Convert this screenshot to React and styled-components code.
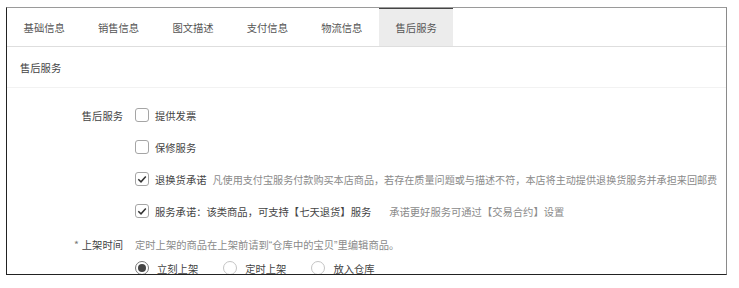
import React from 'react'
import styled, { createGlobalStyle } from 'styled-components'

const GlobalStyle = createGlobalStyle`
    body {
        margin: 0;
        background: #fff;
        font-family: "Noto Sans CJK SC", "Noto Sans", sans-serif;
    }
`

const Frame = styled.div`
    width: 721px;
    height: 268px;
    margin: 7px 0 0 6px;
    box-sizing: border-box;
    border-top: 1px solid #9a9a9a;
    border-right: 1px solid #8a8a8a;
    border-bottom: 1px solid #222;
    border-left: 1px solid #222;
    overflow: hidden;
    font-size: 10.3px;
    color: #444;
`

const TabBar = styled.div`
    display: flex;
    margin-top: -1px;
    height: 40px;
    box-sizing: border-box;
    border-bottom: 1px solid #dedede;
`

const Tab = styled.div`
    width: 74.4px;
    box-sizing: border-box;
    display: flex;
    align-items: center;
    justify-content: center;
    border-top: 2px solid ${p => (p.$active ? '#444' : 'transparent')};
    background: ${p => (p.$active ? '#ececec' : 'transparent')};
    color: #555;
    white-space: nowrap;
`

const SectionHead = styled.div`
    height: 41px;
    box-sizing: border-box;
    display: flex;
    align-items: center;
    padding-left: 13px;
    border-bottom: 1px solid #f2f2f2;
    color: #444;
`

const Form = styled.div`
    padding-top: 11px;
`

const Row = styled.div`
    display: flex;
    align-items: center;
    height: ${p => p.$h || 32}px;
    margin-top: ${p => p.$mt || 0}px;
    white-space: nowrap;
`

const Label = styled.div`
    width: 116px;
    margin-right: 12px;
    text-align: right;
    color: #444;
    flex-shrink: 0;
`

const Star = styled.span`
    color: #777;
    margin-right: 3px;
`

const Box = styled.span`
    width: 14px;
    height: 14px;
    box-sizing: border-box;
    border: 1px solid #a5a5a5;
    border-radius: 3px;
    margin-right: 6px;
    display: inline-flex;
    align-items: center;
    justify-content: center;
    flex-shrink: 0;
`

const OptionText = styled.span`
    color: #444;
`

const Desc = styled.span`
    color: #8a8a8a;
    font-size: ${p => p.$fs || 10.3}px;
    margin-left: ${p => p.$ml ?? 6}px;
`

const Quote = styled.span`
    font-family: "Liberation Sans", sans-serif;
`

const RadioItem = styled.span`
    display: inline-flex;
    align-items: center;
    margin-right: 25px;
`

const Radio = styled.span`
    width: 14px;
    height: 14px;
    box-sizing: border-box;
    border-radius: 50%;
    border: 1px solid ${p => (p.$checked ? '#777' : '#c4c4c4')};
    margin-right: 8px;
    display: inline-flex;
    align-items: center;
    justify-content: center;
    &::after {
        content: '';
        width: 8px;
        height: 8px;
        border-radius: 50%;
        background: ${p => (p.$checked ? '#444' : 'transparent')};
    }
`

const Check = () => (
    <svg width="12" height="12" viewBox="0 0 12 12">
        <polyline points="2.3,6.2 5,8.8 9.8,3.4" fill="none" stroke="#333" strokeWidth="1.5" />
    </svg>
)

const Checkbox = ({ checked }) => <Box>{checked && <Check />}</Box>

const tabs = ['基础信息', '销售信息', '图文描述', '支付信息', '物流信息', '售后服务']

export default function App() {
    return (
        <>
            <GlobalStyle />
            <Frame>
                <TabBar>
                    {tabs.map((t, i) => (
                        <Tab key={t} $active={i === 5}>{t}</Tab>
                    ))}
                </TabBar>
                <SectionHead>售后服务</SectionHead>
                <Form>
                    <Row>
                        <Label>售后服务</Label>
                        <Checkbox />
                        <OptionText>提供发票</OptionText>
                    </Row>
                    <Row>
                        <Label />
                        <Checkbox />
                        <OptionText>保修服务</OptionText>
                    </Row>
                    <Row>
                        <Label />
                        <Checkbox checked />
                        <OptionText>退换货承诺</OptionText>
                        <Desc $fs={10.1}>凡使用支付宝服务付款购买本店商品，若存在质量问题或与描述不符，本店将主动提供退换货服务并承担来回邮费</Desc>
                    </Row>
                    <Row>
                        <Label />
                        <Checkbox checked />
                        <OptionText>服务承诺：该类商品，可支持【七天退货】服务</OptionText>
                        <Desc $ml={18}>承诺更好服务可通过【交易合约】设置</Desc>
                    </Row>
                    <Row $h={24} $mt={5}>
                        <Label><Star>*</Star>上架时间</Label>
                        <Desc $ml={0}>定时上架的商品在上架前请到<Quote>“</Quote>仓库中的宝贝<Quote>”</Quote>里编辑商品。</Desc>
                    </Row>
                    <Row $h={24}>
                        <Label />
                        <RadioItem><Radio $checked /><OptionText>立刻上架</OptionText></RadioItem>
                        <RadioItem><Radio /><OptionText>定时上架</OptionText></RadioItem>
                        <RadioItem><Radio /><OptionText>放入仓库</OptionText></RadioItem>
                    </Row>
                </Form>
            </Frame>
        </>
    )
}
